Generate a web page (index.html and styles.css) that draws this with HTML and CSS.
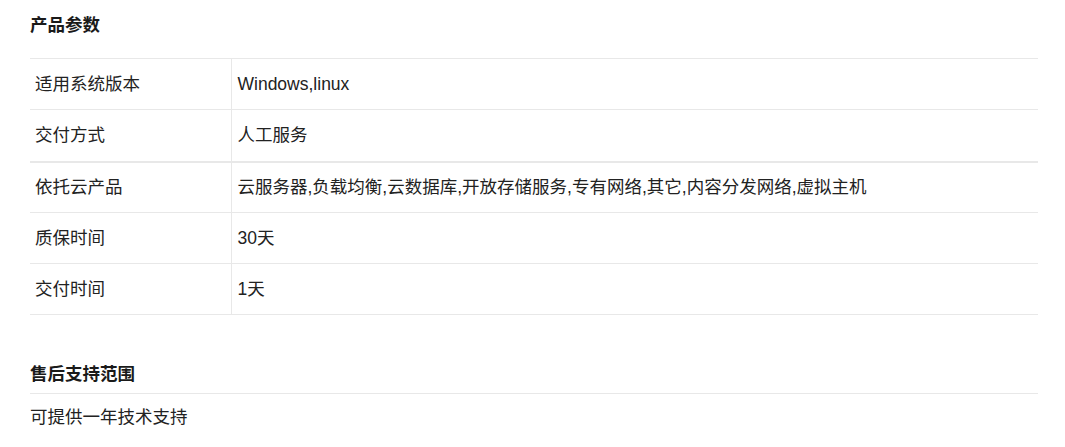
FILE: index.html
```html
<!DOCTYPE html>
<html lang="zh">
<head>
<meta charset="utf-8">
<link rel="stylesheet" href="styles.css">
</head>
<body>
<div class="page">
  <h2 class="title">产品参数</h2>
  <table class="params">
    <tr><td class="k">适用系统版本</td><td class="v">Windows,linux</td></tr>
    <tr class="thick"><td class="k">交付方式</td><td class="v">人工服务</td></tr>
    <tr><td class="k">依托云产品</td><td class="v">云服务器,负载均衡,云数据库,开放存储服务,专有网络,其它,内容分发网络,虚拟主机</td></tr>
    <tr><td class="k">质保时间</td><td class="v">30天</td></tr>
    <tr><td class="k">交付时间</td><td class="v">1天</td></tr>
  </table>
  <h2 class="title title2">售后支持范围</h2>
  <p class="desc">可提供一年技术支持</p>
</div>
</body>
</html>
```
FILE: styles.css
```css
html, body {
  margin: 0;
  padding: 0;
  background: #fff;
}
body {
  font-family: "Liberation Sans", "Noto Sans CJK SC", sans-serif;
  color: #222;
  font-size: 17.5px;
}
.page {
  width: 1008px;
  padding-left: 30px;
}
.title {
  margin: 0;
  padding-top: 13px;
  font-size: 17.5px;
  line-height: 24px;
  font-weight: bold;
  color: #1a1a1a;
  margin-bottom: 21px;
}
.params {
  width: 1008px;
  border-collapse: collapse;
  border-top: 1px solid #e8e8e8;
}
.params td {
  height: 51px;
  padding: 0 6px;
  border-bottom: 1px solid #e8e8e8;
  line-height: 24px;
  vertical-align: middle;
  box-sizing: border-box;
}
.params tr.thick td {
  height: 52px;
  border-bottom: 2px solid #e8e8e8;
}
.params td.k {
  width: 201px;
  padding-left: 5px;
  border-right: 1px solid #e8e8e8;
}
.title2 {
  padding-top: 47px;
  margin-bottom: 0;
  padding-bottom: 7px;
  border-bottom: 1px solid #e8e8e8;
}
.desc {
  margin: 11px 0 0;
  line-height: 24px;
}
```
